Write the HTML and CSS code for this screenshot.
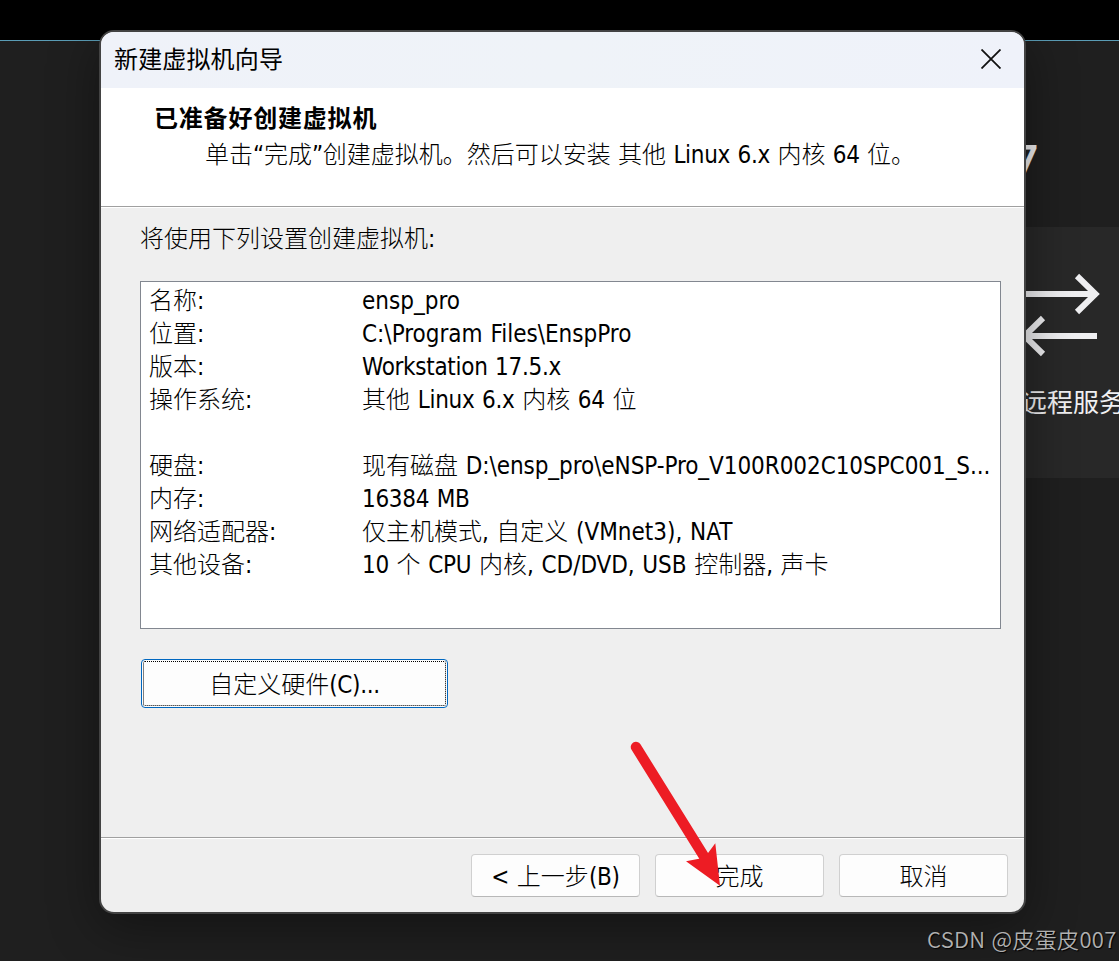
FILE: index.html
```html
<!DOCTYPE html>
<html lang="zh-CN">
<head>
    <meta charset="utf-8">
    <title>新建虚拟机向导</title>
    <link rel="stylesheet" href="styles.css">
</head>
<body>
    <div class="workspace">
        <div class="topbar"></div>
        <div class="home">
            <div class="version">7</div>
            <div class="tile">
                <svg class="tile-icon" width="78" height="84" viewBox="0 0 78 84" fill="none" stroke="#efeff1" stroke-width="6">
                    <path d="M0 21H73M55 3L73.5 21L55 39M75 63H3M21 45L2.500 63L21 81"/>
                </svg>
                <div class="tile-label">远程服务</div>
            </div>
        </div>
    </div>

    <div class="dialog">
        <div class="titlebar">
            <span class="title">新建虚拟机向导</span>
            <svg class="close" width="20" height="20" viewBox="0 0 20 20" fill="none" stroke="#111" stroke-width="1.8">
                <path d="M.5 .5L19.500 19.500M19.500 .5L.5 19.500"/>
            </svg>
        </div>
        <div class="header">
            <h1>已准备好创建虚拟机</h1>
            <p>单击<b>“</b>完成<b>”</b>创建虚拟机。然后可以安装 其他 <b>Linux 6.x</b> 内核 <b>64</b> 位。</p>
        </div>
        <div class="content">
            <p class="intro">将使用下列设置创建虚拟机<b>:</b></p>
            <div class="summary">
                <div class="label">名称<b>:</b></div><div><b class="wide">ensp_pro</b></div>
                <div class="label">位置<b>:</b></div><div><b class="wide">C:\Program Files\EnspPro</b></div>
                <div class="label">版本<b>:</b></div><div><b>Workstation 17.5.x</b></div>
                <div class="label">操作系统<b>:</b></div><div>其他 <b>Linux 6.x</b> 内核 <b>64</b> 位</div>
                <div class="gap"></div>
                <div class="label">硬盘<b>:</b></div><div>现有磁盘 <b class="path">D:\ensp_pro\eNSP-Pro_V100R002C10SPC001_S...</b></div>
                <div class="label">内存<b>:</b></div><div><b>16384 MB</b></div>
                <div class="label">网络适配器<b>:</b></div><div>仅主机模式<b>,</b> 自定义 <b class="wide">(VMnet3), NAT</b></div>
                <div class="label">其他设备<b>:</b></div><div><b>10</b> 个 <b>CPU</b> 内核<b class="path">, CD/DVD, USB</b> 控制器<b>,</b> 声卡</div>
            </div>
            <button class="customize">自定义硬件<b>(C)...</b></button>
        </div>
        <div class="footer">
            <button><b>&lt;</b> 上一步<b>(B)</b></button>
            <button>完成</button>
            <button>取消</button>
        </div>
    </div>

    <svg class="arrow" width="90" height="146" viewBox="0 0 90 146">
        <path d="M6 7L75 118" stroke="#ed1c24" stroke-width="10.500" stroke-linecap="round"/>
        <path d="M56 121.300L69 118.700L77.300 114L85.300 103.300L90 145.700Z" fill="#ed1c24"/>
    </svg>

    <div class="watermark">CSDN @皮蛋皮007</div>
</body>
</html>
```
FILE: styles.css
```css
* {
    box-sizing: border-box;
}

body {
    margin: 0;
    width: 1119px;
    height: 961px;
    overflow: hidden;
    position: relative;
    background: #1f1f1f;
    color: #000;
    font-family: "Noto Sans CJK SC", sans-serif;
    font-size: 24px;
    font-weight: 300;
}

h1, p {
    margin: 0;
}

/* latin text inside the chinese labels */
b {
    font-family: "DejaVu Sans Condensed", "DejaVu Sans", sans-serif;
    font-stretch: condensed;
    font-weight: 400;
    font-size: 24px;
    line-height: 1;
    letter-spacing: -0.3px;
    word-spacing: 1px;
}

.wide {
    letter-spacing: 0;
}

.path {
    letter-spacing: -0.07px;
}

.topbar {
    height: 41px;
    background: #000;
    border-bottom: 1px solid #5a9cb5;
}

.home {
    display: flex;
    flex-direction: column;
    padding-left: 1020px;
    color: #f0f0f2;
}

.version {
    height: 186px;
    padding-top: 88px;
    margin-left: -6px;
    font: 600 42px/60px "Noto Sans", sans-serif;
}

.tile {
    height: 251px;
    padding-top: 46px;
    background: #282828;
}

.tile-icon {
    display: block;
    margin-left: 2px;
}

.tile-label {
    margin: 25px 0 0 1px;
    font-size: 26px;
    line-height: 38px;
    font-weight: 400;
    white-space: nowrap;
}

.dialog {
    position: absolute;
    left: 99px;
    top: 30px;
    width: 927px;
    height: 884px;
    display: flex;
    flex-direction: column;
    overflow: hidden;
    border: 2px solid #434343;
    border-radius: 15px;
    background: #efefef;
    box-shadow: 0 12px 50px rgba(0, 0, 0, 0.4);
}

.titlebar {
    display: flex;
    align-items: center;
    justify-content: space-between;
    height: 56px;
    padding: 0 23px 2px 13px;
    background: linear-gradient(90deg, #eff2f9, #eff3f8 50%, #eff2fa);
    font-weight: 400;
}

.title {
    margin-bottom: 4px;
    letter-spacing: 0.15px;
}

.header {
    height: 119px;
    padding: 11px 0 0 53px;
    background: #fff;
    border-bottom: 1px solid #a0a0a0;
    white-space: nowrap;
}

.header h1 {
    font-size: 24px;
    line-height: 36px;
    font-weight: 700;
    letter-spacing: 0.8px;
}

.header p {
    padding-left: 51px;
    line-height: 36px;
    word-spacing: 2px;
}

.content {
    flex: 1;
    padding: 11px 23px 0 39px;
    border-top: 1px solid #fff;
    border-bottom: 1px solid #a0a0a0;
}

.intro {
    height: 62px;
    line-height: 36px;
}

.summary {
    display: grid;
    grid-template-columns: 213px 1fr;
    grid-auto-rows: 33px;
    height: 348px;
    padding: 0 0 0 8px;
    border: 1px solid #828790;
    background: #fff;
    line-height: 33px;
    white-space: nowrap;
    word-spacing: 2.4px;
}

.gap {
    grid-column: 1 / 3;
}

button {
    width: 169px;
    height: 43px;
    padding: 0 0 2px;
    border: 1px solid #d0d0d0;
    border-bottom-color: #b8b8b8;
    border-radius: 4px;
    background: #fdfdfd;
    color: #000;
    font: inherit;
    line-height: 38px;
    word-spacing: 2.4px;
}

.customize {
    display: block;
    width: 307px;
    height: 49px;
    margin: 30px 0 0 1px;
    border-color: #0067c0;
    outline: 1px dotted #000;
    outline-offset: -3px;
}

.footer {
    display: flex;
    justify-content: flex-end;
    gap: 15px;
    height: 74px;
    padding: 15px 16px 0 0;
    border-top: 1px solid #fff;
}

.arrow {
    position: absolute;
    left: 630px;
    top: 740px;
}

.watermark {
    position: absolute;
    left: 927px;
    top: 922px;
    color: #b0b0b0;
    font-size: 22px;
    font-weight: 350;
    line-height: 32px;
    letter-spacing: 0.3px;
    word-spacing: 1px;
    white-space: nowrap;
    text-shadow: 1px 1px 1px #000;
}
```
